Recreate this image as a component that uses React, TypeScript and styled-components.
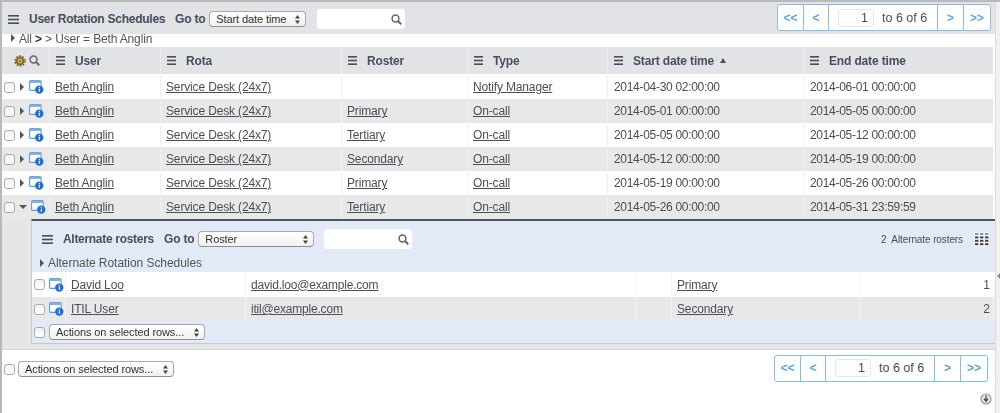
import * as React from 'react'
import styled, { createGlobalStyle } from 'styled-components'

const Global = createGlobalStyle`
  html, body { margin: 0; padding: 0; background: #fff; }
  body { font-family: 'Liberation Sans', Arial, sans-serif; font-size: 12px; color: #4a4d52; }
`

type Row = { rota: string; roster: string; type: string; start: string; end: string }

const rows: Row[] = [
  { rota: 'Service Desk (24x7)', roster: '', type: 'Notify Manager', start: '2014-04-30 02:00:00', end: '2014-06-01 00:00:00' },
  { rota: 'Service Desk (24x7)', roster: 'Primary', type: 'On-call', start: '2014-05-01 00:00:00', end: '2014-05-05 00:00:00' },
  { rota: 'Service Desk (24x7)', roster: 'Tertiary', type: 'On-call', start: '2014-05-05 00:00:00', end: '2014-05-12 00:00:00' },
  { rota: 'Service Desk (24x7)', roster: 'Secondary', type: 'On-call', start: '2014-05-12 00:00:00', end: '2014-05-19 00:00:00' },
  { rota: 'Service Desk (24x7)', roster: 'Primary', type: 'On-call', start: '2014-05-19 00:00:00', end: '2014-05-26 00:00:00' },
  { rota: 'Service Desk (24x7)', roster: 'Tertiary', type: 'On-call', start: '2014-05-26 00:00:00', end: '2014-05-31 23:59:59' },
]

const alternates = [
  { name: 'David Loo', email: 'david.loo@example.com', roster: 'Primary', order: 1 },
  { name: 'ITIL User', email: 'itil@example.com', roster: 'Secondary', order: 2 },
]

const columns = ['User', 'Rota', 'Roster', 'Type', 'Start date time', 'End date time']

function Burger (props: { size?: number }) {
  const w = props.size || 11
  return (
    <svg width={w} height="9" viewBox={`0 0 ${w} 9`} style={{ flex: 'none' }}>
      <rect width={w} height="1.6" y="0" fill="#4a4f57" />
      <rect width={w} height="1.6" y="3.7" fill="#4a4f57" />
      <rect width={w} height="1.6" y="7.4" fill="#4a4f57" />
    </svg>
  )
}

function Magnifier () {
  return (
    <svg width="11" height="11" viewBox="0 0 11 11">
      <circle cx="4.5" cy="4.5" r="3.4" fill="none" stroke="#666" strokeWidth="1.5" />
      <path d="M7 7l3.2 3.2" stroke="#666" strokeWidth="2" />
    </svg>
  )
}

function Gear () {
  return (
    <svg width="12" height="12" viewBox="0 0 12 12">
      <circle cx="6" cy="6" r="4.4" fill="#8a6a2c" />
      <circle cx="6" cy="6" r="4.9" fill="none" stroke="#7a5c22" strokeWidth="1.6" strokeDasharray="1.6 1.5" />
      <circle cx="6" cy="6" r="2.4" fill="#e0b040" />
      <circle cx="6" cy="6" r="1" fill="#8a6a2c" />
    </svg>
  )
}

function DetailIcon () {
  return (
    <svg width="15" height="14" viewBox="0 0 15 14" style={{ flex: 'none' }}>
      <rect x="0.6" y="0.6" width="11.5" height="9.8" rx="1" fill="#fff" stroke="#5b9be0" strokeWidth="1.1" />
      <rect x="0.6" y="0.6" width="11.5" height="2.4" fill="#7fb2e8" />
      <circle cx="10.3" cy="9.6" r="4.2" fill="#1f6fd8" />
      <rect x="9.8" y="8.6" width="1.1" height="3.2" fill="#fff" />
      <rect x="9.8" y="6.9" width="1.1" height="1.1" fill="#fff" />
    </svg>
  )
}

function GridIcon () {
  const dots = []
  for (let y = 0; y < 4; y++) {
    for (let x = 0; x < 3; x++) {
      dots.push(<rect key={`${x}-${y}`} x={1 + x * 5} y={1 + y * 3.4} width="3.4" height="2" fill={y === 0 ? '#6f9fdc' : '#444'} />)
    }
  }
  return <svg width="15" height="15" viewBox="0 0 15 15"><rect width="15" height="15" fill="#f3f6fb" />{dots}</svg>
}

function Arrows () {
  return (
    <svg width="5" height="9" viewBox="0 0 5 9">
      <path d="M2.5 0L5 3.4H0z" fill="#444" />
      <path d="M2.5 9L5 5.6H0z" fill="#444" />
    </svg>
  )
}

function Select (props: { label: string; width: number }) {
  return (
    <SelectBox $width={props.width}>
      <span>{props.label}</span>
      <Arrows />
    </SelectBox>
  )
}

function Search (props: { width: number; gap: number }) {
  return (
    <SearchBox $width={props.width} $gap={props.gap}>
      <Magnifier />
    </SearchBox>
  )
}

function Pager () {
  return (
    <PagerBox>
      <PagerBtn $width={26}>&lt;&lt;</PagerBtn>
      <PagerBtn $width={25}>&lt;</PagerBtn>
      <PagerMiddle>
        <PageInput>1</PageInput>
        <span>to 6 of 6</span>
      </PagerMiddle>
      <PagerBtn $width={26}>&gt;</PagerBtn>
      <PagerBtn $width={26} $last>&gt;&gt;</PagerBtn>
    </PagerBox>
  )
}

export default function App () {
  return (
    <Page>
      <Global />
      <Main>
        <Toolbar>
          <Burger />
          <Title>User Rotation Schedules</Title>
          <GoTo>Go to</GoTo>
          <Select label='Start date time' width={97} />
          <Search width={88} gap={11} />
          <TopPager><Pager /></TopPager>
        </Toolbar>
        <Crumb>
          <Tri />
          <span>All <b>&gt;</b> &gt; User = Beth Anglin</span>
        </Crumb>
        <Table>
          <colgroup>
            <col style={{ width: 47 }} />
            <col style={{ width: 111 }} />
            <col style={{ width: 181 }} />
            <col style={{ width: 126 }} />
            <col style={{ width: 140 }} />
            <col style={{ width: 196 }} />
            <col />
          </colgroup>
          <thead>
            <tr>
              <Head>
                <HeadTools><Gear /><Magnifier /></HeadTools>
              </Head>
              {columns.map(c => (
                <Head key={c}>
                  <HeadLabel>
                    <Burger size={9} />
                    <span>{c}</span>
                    {c === 'Start date time' && <SortMark />}
                  </HeadLabel>
                </Head>
              ))}
            </tr>
          </thead>
          <tbody>
            {rows.map((r, i) => (
              <DataRow key={r.start} $odd={i % 2 === 1}>
                <td>
                  <RowTools>
                    <Check />
                    {i === 5 ? <TriDown /> : <Tri />}
                    <DetailIcon />
                  </RowTools>
                </td>
                <td><a>Beth Anglin</a></td>
                <td><a>{r.rota}</a></td>
                <td><a>{r.roster}</a></td>
                <td><a>{r.type}</a></td>
                <Stamp>{r.start}</Stamp>
                <Stamp>{r.end}</Stamp>
              </DataRow>
            ))}
            <tr>
              <NestCell colSpan={7}>
                <Panel>
                  <PanelBar>
                    <Burger />
                    <PanelTitle>Alternate rosters</PanelTitle>
                    <GoTo>Go to</GoTo>
                    <Select label='Roster' width={116} />
                    <Search width={88} gap={10} />
                    <Count>2&nbsp; Alternate rosters</Count>
                    <GridIcon />
                  </PanelBar>
                  <PanelCrumb>
                    <Tri />
                    <span>Alternate Rotation Schedules</span>
                  </PanelCrumb>
                  <SubTable>
                    <colgroup>
                      <col style={{ width: 33 }} />
                      <col style={{ width: 180 }} />
                      <col style={{ width: 391 }} />
                      <col style={{ width: 35 }} />
                      <col style={{ width: 189 }} />
                      <col />
                    </colgroup>
                    <tbody>
                      {alternates.map((a, i) => (
                        <SubRow key={a.name} $odd={i === 1}>
                          <td><SubTools><Check /><DetailIcon /></SubTools></td>
                          <td><a>{a.name}</a></td>
                          <td><Mail>{a.email}</Mail></td>
                          <td></td>
                          <td><a>{a.roster}</a></td>
                          <Num>{a.order}</Num>
                        </SubRow>
                      ))}
                    </tbody>
                  </SubTable>
                  <PanelFoot>
                    <Check />
                    <Select label='Actions on selected rows...' width={156} />
                  </PanelFoot>
                </Panel>
              </NestCell>
            </tr>
          </tbody>
        </Table>
        <Footer>
          <FootActions>
            <Check />
            <Select label='Actions on selected rows...' width={156} />
          </FootActions>
          <Pager />
        </Footer>
        <FootIcon>
          <svg width="12" height="12" viewBox="0 0 12 12">
            <circle cx="6" cy="6" r="5" fill="#e4e4e4" stroke="#999" strokeWidth="1.2" />
            <path d="M6 2.2V7M4 5.6L6 8.4l2-2.8" stroke="#444" strokeWidth="1.2" fill="none" />
          </svg>
        </FootIcon>
      </Main>
      <Splitter><SplitMark /></Splitter>
    </Page>
  )
}

const Page = styled.div`
  display: flex;
  width: 1000px;
  height: 413px;
  overflow: hidden;
  border-top: 2px solid #b9b9b9;
  box-sizing: border-box;
  filter: blur(0.35px);
`

const Main = styled.div`
  width: 993px;
  border-left: 2px solid #b9b9b9;
  display: flex;
  flex-direction: column;
`

const Splitter = styled.div`
  position: relative;
  flex: 1;
  background: #f1f1f1;
  border-left: 1px solid #dcdcdc;
`

const SplitMark = styled.div`
  position: absolute;
  left: 1px;
  top: 271px;
  border-style: solid;
  border-width: 3px 3px 3px 0;
  border-color: transparent #888 transparent transparent;
`

const Toolbar = styled.div`
  height: 32px;
  box-sizing: border-box;
  display: flex;
  align-items: center;
  background: #e2e3e6;
  padding: 2px 4px 0 6px;
  flex: none;
`

const TopPager = styled.div`
  margin-left: auto;
  margin-top: -3px;
`

const Title = styled.div`
  font-weight: bold;
  color: #47505c;
  margin-left: 10px;
  width: 136px;
  letter-spacing: -0.25px;
  white-space: nowrap;
`

const GoTo = styled.div`
  font-weight: bold;
  color: #47505c;
  margin-left: 10px;
  margin-right: 4px;
  letter-spacing: -0.2px;
`

const SelectBox = styled.div<{ $width: number }>`
  width: ${p => p.$width}px;
  height: 16px;
  box-sizing: border-box;
  flex: none;
  display: flex;
  align-items: center;
  justify-content: space-between;
  padding: 0 5px 0 6px;
  font-size: 11px;
  letter-spacing: -0.1px;
  color: #333;
  white-space: nowrap;
  background: linear-gradient(#fff, #f1f1f1);
  border: 1px solid #a9a9a9;
  border-bottom-color: #8f8f8f;
  border-radius: 4px;
`

const SearchBox = styled.div<{ $width: number; $gap: number }>`
  width: ${p => p.$width}px;
  height: 20px;
  margin-left: ${p => p.$gap}px;
  box-sizing: border-box;
  background: #fff;
  border-radius: 3px;
  display: flex;
  align-items: center;
  justify-content: flex-end;
  padding-right: 3px;
`

const PagerBox = styled.div`
  margin-left: auto;
  width: 214px;
  height: 27px;
  box-sizing: border-box;
  display: flex;
  background: #fff;
  border: 1px solid #85bdf0;
  border-radius: 3px;
  font-size: 13px;
`

const PagerBtn = styled.div<{ $width: number; $last?: boolean }>`
  width: ${p => p.$width}px;
  box-sizing: border-box;
  display: flex;
  align-items: center;
  justify-content: center;
  color: #5aa5ea;
  font-size: 12px;
  font-weight: bold;
  border-right: ${p => (p.$last ? 'none' : '1px solid #85bdf0')};
`

const PagerMiddle = styled.div`
  flex: 1;
  display: flex;
  align-items: center;
  gap: 8px;
  padding-left: 9px;
  border-right: 1px solid #85bdf0;
  color: #4a4d52;
  font-size: 12.5px;
  white-space: nowrap;
`

const PageInput = styled.div`
  width: 36px;
  height: 18px;
  box-sizing: border-box;
  border: 1px solid #e6e6e6;
  border-radius: 3px;
  text-align: right;
  padding-right: 5px;
  line-height: 16px;
`

const Crumb = styled.div`
  height: 13px;
  line-height: 10px;
  flex: none;
  background: #fff;
  color: #555;
  font-size: 12px;
  letter-spacing: -0.15px;
  display: flex;
  align-items: flex-start;
  gap: 4px;
  padding-left: 9px;
  box-sizing: border-box;
  b { color: #333; }
`

const Tri = styled.span`
  display: inline-block;
  flex: none;
  border-style: solid;
  border-width: 4px 0 4px 4px;
  border-color: transparent transparent transparent #555;
`

const TriDown = styled.span`
  display: inline-block;
  flex: none;
  margin-left: -1px;
  margin-right: -1px;
  border-style: solid;
  border-width: 4px 4px 0 4px;
  border-color: #555 transparent transparent transparent;
`

const Table = styled.table`
  width: 993px;
  table-layout: fixed;
  border-collapse: separate;
  border-spacing: 0;
  flex: none;
  font-size: 12px;
`

const Head = styled.th`
  height: 28px;
  padding: 0;
  background: #e2e3e6;
  border-left: 1px solid #edeef0;
  border-bottom: 1px solid #fff;
  box-sizing: border-box;
  text-align: left;
  color: #47505c;
  font-weight: bold;
  letter-spacing: -0.15px;
  &:first-child { border-left: none; }
  &:last-child { border-right: 2px solid #fff; }
`

const HeadTools = styled.div`
  display: flex;
  justify-content: center;
  align-items: center;
  gap: 3px;
  padding-left: 2px;
`

const HeadLabel = styled.div`
  display: flex;
  align-items: center;
  gap: 10px;
  padding-left: 6px;
`

const SortMark = styled.span`
  margin-left: -4px;
  border-style: solid;
  border-width: 0 3px 5px 3px;
  border-color: transparent transparent #47505c transparent;
`

const DataRow = styled.tr<{ $odd: boolean }>`
  height: 24px;
  > td {
    padding: 0 0 0 5px;
    background: ${p => (p.$odd ? '#e8e8e8' : '#fff')};
    border-left: 1px solid #f1f1f1;
    white-space: nowrap;
    box-sizing: border-box;
  }
  > td:first-child { border-left: none; padding-left: 2px; }
  > td:last-child { border-right: 2px solid #fff; }
  a { text-decoration: underline; color: #4a4f5a; letter-spacing: -0.15px; }
`

const Stamp = styled.td`
  letter-spacing: -0.3px;
  && { padding-left: 6px; }
`

const RowTools = styled.div`
  display: flex;
  align-items: center;
  gap: 5px;
`

const Check = styled.span`
  display: inline-block;
  flex: none;
  width: 11px;
  height: 11px;
  box-sizing: border-box;
  background: linear-gradient(#f2f2f2, #fff);
  border: 1px solid #aaa;
  border-radius: 3px;
`

const NestCell = styled.td`
  padding: 0 0 5px 29px;
  background: #e6e6e6;
  border-bottom: 1px solid #d6d6d6;
`

const Panel = styled.div`
  background: #e2eaf7;
  border-top: 2px solid #50545c;
  border-left: 1px solid #c8c8c8;
  border-bottom: 1px solid #c4c9d2;
  display: flex;
  flex-direction: column;
  height: 125px;
  box-sizing: border-box;
`

const PanelBar = styled.div`
  height: 36px;
  display: flex;
  align-items: center;
  padding: 0 6px 0 10px;
  flex: none;
`

const PanelTitle = styled.div`
  font-weight: bold;
  color: #47505c;
  margin-left: 10px;
  width: 91px;
  letter-spacing: -0.3px;
  white-space: nowrap;
`

const Count = styled.div`
  margin-left: auto;
  margin-right: 11px;
  font-size: 10px;
  letter-spacing: -0.1px;
  color: #4a4d52;
`

const PanelCrumb = styled.div`
  height: 15px;
  box-sizing: border-box;
  padding: 0 0 3px 8px;
  flex: none;
  display: flex;
  align-items: center;
  gap: 4px;
  color: #555;
  letter-spacing: -0.05px;
`

const SubTable = styled.table`
  width: 100%;
  table-layout: fixed;
  border-collapse: separate;
  border-spacing: 0;
  font-size: 12px;
  flex: none;
`

const SubRow = styled.tr<{ $odd: boolean }>`
  height: ${p => (p.$odd ? 24 : 25)}px;
  > td {
    padding: 0 0 0 5px;
    background: ${p => (p.$odd ? '#e8e8e8' : '#fff')};
    border-left: 1px solid #f3f3f3;
    box-sizing: border-box;
    white-space: nowrap;
  }
  > td:first-child { border-left: none; padding-left: 2px; }
  > td:last-child { border-right: 3px solid ${p => (p.$odd ? '#ededed' : '#fff')}; }
  a { text-decoration: underline; color: #4a4f5a; letter-spacing: -0.15px; }
`

const Mail = styled.a`
  && { letter-spacing: -0.2px; }
`

const SubTools = styled.div`
  display: flex;
  align-items: center;
  gap: 4px;
`

const Num = styled.td`
  && { text-align: right; padding-right: 2px; }
`

const PanelFoot = styled.div`
  display: flex;
  align-items: center;
  gap: 4px;
  padding: 0 0 0 2px;
  flex: 1;
`

const Footer = styled.div`
  display: flex;
  align-items: center;
  height: 36px;
  padding: 0 7px 0 2px;
  flex: none;
`

const FootActions = styled.div`
  display: flex;
  align-items: center;
  gap: 3px;
  padding-top: 2px;
`

const FootIcon = styled.div`
  display: flex;
  justify-content: flex-end;
  padding: 7px 3px 0 0;
`
